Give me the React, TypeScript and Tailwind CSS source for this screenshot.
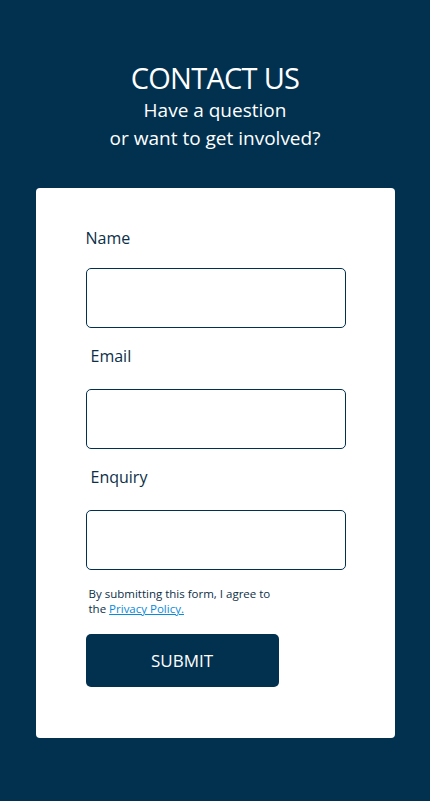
export default function App() {
  return (
    <div
      className="min-h-[801px] w-full bg-[#01314f] flex flex-col items-center pt-[58px]"
      style={{ fontFamily: '"Open Sans", "Noto Sans", sans-serif' }}
    >
      <h1 className="text-white text-[29px] leading-[40px] font-normal tracking-tight">CONTACT US</h1>
      <p className="text-white text-[19px] leading-[28px] text-center mt-[-2px]">
        Have a question
        <br />
        or want to get involved?
      </p>

      <div className="mt-[36px] w-[359px] h-[550px] bg-white rounded-[4px] pl-[50px] pt-[38px]">
        <form className="flex flex-col w-[260px]">
          <label className="text-[#0c2f48] text-[16px] leading-[24px]">Name</label>
          <input className="mt-[18px] h-[60px] w-full border border-[#01314f] rounded-[5px] outline-none" />

          <label className="text-[#0c2f48] text-[16px] leading-[24px] mt-[16px] pl-[5px]">Email</label>
          <input className="mt-[21px] h-[60px] w-full border border-[#01314f] rounded-[5px] outline-none" />

          <label className="text-[#0c2f48] text-[16px] leading-[24px] mt-[16px] pl-[5px]">Enquiry</label>
          <input className="mt-[21px] h-[60px] w-full border border-[#01314f] rounded-[5px] outline-none" />

          <p className="mt-[16px] pl-[3px] text-[#0c2f48] text-[11.5px] leading-[15px]">
            By submitting this form, I agree to
            <br />
            the <a className="text-[#0a8ad8] underline">Privacy Policy.</a>
          </p>

          <button
            type="button"
            className="mt-[18px] w-[193px] h-[53px] bg-[#01314f] text-white text-[17px] rounded-[5px]"
          >
            SUBMIT
          </button>
        </form>
      </div>
    </div>
  );
}
